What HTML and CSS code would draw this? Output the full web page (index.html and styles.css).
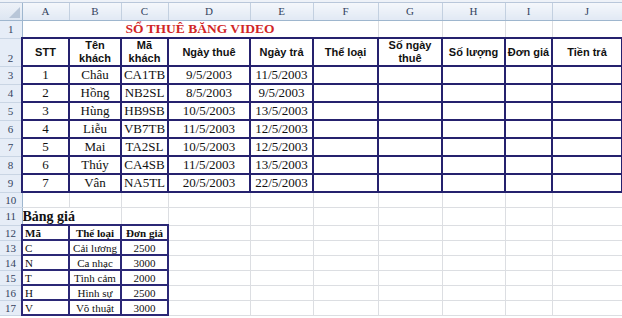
FILE: index.html
```html
<!DOCTYPE html>
<html lang="vi">
<head>
<meta charset="utf-8">
<title>Sổ thuê băng video</title>
<link rel="stylesheet" href="styles.css">
</head>
<body>
<div class="topstrip"></div>
<table class="sheet">
  <colgroup>
    <col class="w-hdr"><col class="w-a"><col class="w-b"><col class="w-c"><col class="w-d"><col class="w-e"><col class="w-f"><col class="w-g"><col class="w-h"><col class="w-i"><col class="w-j">
  </colgroup>
  <tr class="r-colhdr">
    <th class="corner"><span class="tri"></span></th>
    <th class="colhdr">A</th><th class="colhdr">B</th><th class="colhdr">C</th><th class="colhdr">D</th><th class="colhdr">E</th><th class="colhdr">F</th><th class="colhdr">G</th><th class="colhdr">H</th><th class="colhdr">I</th><th class="colhdr">J</th>
  </tr>
  <tr class="r-1">
    <th class="rowhdr">1</th>
    <td class="g title" colspan="6">SỔ THUÊ BĂNG VIDEO</td>
    <td class="g"></td><td class="g"></td><td class="g"></td><td class="g"></td>
  </tr>
  <tr class="r-2">
    <th class="rowhdr bottom">2</th>
    <td class="t hd">STT</td><td class="t hd">Tên<br>khách</td><td class="t hd">Mã<br>khách</td><td class="t hd">Ngày thuê</td><td class="t hd">Ngày trả</td><td class="t hd">Thể loại</td><td class="t hd">Số ngày<br>thuê</td><td class="t hd">Số lượng</td><td class="t hd">Đơn giá</td><td class="t hd">Tiền trả</td>
  </tr>
  <tr class="r-d">
    <th class="rowhdr">3</th>
    <td class="t d">1</td><td class="t d">Châu</td><td class="t d">CA1TB</td><td class="t d">9/5/2003</td><td class="t d">11/5/2003</td><td class="t"></td><td class="t"></td><td class="t"></td><td class="t"></td><td class="t"></td>
  </tr>
  <tr class="r-d">
    <th class="rowhdr">4</th>
    <td class="t d">2</td><td class="t d">Hồng</td><td class="t d">NB2SL</td><td class="t d">8/5/2003</td><td class="t d">9/5/2003</td><td class="t"></td><td class="t"></td><td class="t"></td><td class="t"></td><td class="t"></td>
  </tr>
  <tr class="r-d">
    <th class="rowhdr">5</th>
    <td class="t d">3</td><td class="t d">Hùng</td><td class="t d">HB9SB</td><td class="t d">10/5/2003</td><td class="t d">13/5/2003</td><td class="t"></td><td class="t"></td><td class="t"></td><td class="t"></td><td class="t"></td>
  </tr>
  <tr class="r-d">
    <th class="rowhdr">6</th>
    <td class="t d">4</td><td class="t d">Liễu</td><td class="t d">VB7TB</td><td class="t d">11/5/2003</td><td class="t d">12/5/2003</td><td class="t"></td><td class="t"></td><td class="t"></td><td class="t"></td><td class="t"></td>
  </tr>
  <tr class="r-d">
    <th class="rowhdr">7</th>
    <td class="t d">5</td><td class="t d">Mai</td><td class="t d">TA2SL</td><td class="t d">10/5/2003</td><td class="t d">12/5/2003</td><td class="t"></td><td class="t"></td><td class="t"></td><td class="t"></td><td class="t"></td>
  </tr>
  <tr class="r-d">
    <th class="rowhdr">8</th>
    <td class="t d">6</td><td class="t d">Thúy</td><td class="t d">CA4SB</td><td class="t d">11/5/2003</td><td class="t d">13/5/2003</td><td class="t"></td><td class="t"></td><td class="t"></td><td class="t"></td><td class="t"></td>
  </tr>
  <tr class="r-d">
    <th class="rowhdr">9</th>
    <td class="t d">7</td><td class="t d">Vân</td><td class="t d">NA5TL</td><td class="t d">20/5/2003</td><td class="t d">22/5/2003</td><td class="t"></td><td class="t"></td><td class="t"></td><td class="t"></td><td class="t"></td>
  </tr>
  <tr class="r-10">
    <th class="rowhdr">10</th>
    <td class="g"></td><td class="g"></td><td class="g"></td><td class="g"></td><td class="g"></td><td class="g"></td><td class="g"></td><td class="g"></td><td class="g"></td><td class="g"></td>
  </tr>
  <tr class="r-11">
    <th class="rowhdr">11</th>
    <td class="g section" colspan="2">Bảng giá</td><td class="g"></td><td class="g"></td><td class="g"></td><td class="g"></td><td class="g"></td><td class="g"></td><td class="g"></td><td class="g"></td>
  </tr>
  <tr class="r-p">
    <th class="rowhdr">12</th>
    <td class="p ph left">Mã</td><td class="p ph">Thể loại</td><td class="p ph">Đơn giá</td><td class="g"></td><td class="g"></td><td class="g"></td><td class="g"></td><td class="g"></td><td class="g"></td><td class="g"></td>
  </tr>
  <tr class="r-p">
    <th class="rowhdr">13</th>
    <td class="p left">C</td><td class="p">Cải lương</td><td class="p">2500</td><td class="g"></td><td class="g"></td><td class="g"></td><td class="g"></td><td class="g"></td><td class="g"></td><td class="g"></td>
  </tr>
  <tr class="r-p">
    <th class="rowhdr">14</th>
    <td class="p left">N</td><td class="p">Ca nhạc</td><td class="p">3000</td><td class="g"></td><td class="g"></td><td class="g"></td><td class="g"></td><td class="g"></td><td class="g"></td><td class="g"></td>
  </tr>
  <tr class="r-p">
    <th class="rowhdr">15</th>
    <td class="p left">T</td><td class="p">Tình cảm</td><td class="p">2000</td><td class="g"></td><td class="g"></td><td class="g"></td><td class="g"></td><td class="g"></td><td class="g"></td><td class="g"></td>
  </tr>
  <tr class="r-p">
    <th class="rowhdr">16</th>
    <td class="p left">H</td><td class="p">Hình sự</td><td class="p">2500</td><td class="g"></td><td class="g"></td><td class="g"></td><td class="g"></td><td class="g"></td><td class="g"></td><td class="g"></td>
  </tr>
  <tr class="r-p">
    <th class="rowhdr">17</th>
    <td class="p left">V</td><td class="p">Võ thuật</td><td class="p">3000</td><td class="g"></td><td class="g"></td><td class="g"></td><td class="g"></td><td class="g"></td><td class="g"></td><td class="g"></td>
  </tr>
</table>
</body>
</html>
```

FILE: styles.css
```css
html, body {
  margin: 0;
  padding: 0;
  background: #ffffff;
  overflow: hidden;
}

body {
  width: 622px;
  height: 318px;
  font-family: "Liberation Serif", "Times New Roman", serif;
}

.topstrip {
  height: 2px;
  background: #eef2f8;
  border-bottom: 1px solid #b9c7da;
}

.sheet {
  width: 622px;
  table-layout: fixed;
  border-collapse: collapse;
  border-spacing: 0;
}

.w-hdr { width: 22px; }
.w-a { width: 47px; }
.w-b { width: 52px; }
.w-c { width: 47px; }
.w-d { width: 82px; }
.w-e { width: 63px; }
.w-f { width: 65px; }
.w-g { width: 64px; }
.w-h { width: 63px; }
.w-i { width: 47px; }
.w-j { width: 70px; }

.sheet td, .sheet th {
  padding: 0;
  overflow: hidden;
  white-space: nowrap;
}

.r-colhdr { height: 17px; }
.r-1 { height: 18px; }
.r-2 { height: 27px; }
.r-d { height: 18px; }
.r-10 { height: 15px; }
.r-11 { height: 18px; }
.r-p { height: 15px; }

/* headers */
.corner {
  position: relative;
  background: linear-gradient(#eef2f8, #dde6f2);
  border-right: 1px solid #9eb6ce;
  border-bottom: 1px solid #9eb6ce;
}

.tri {
  position: absolute;
  right: 2px;
  bottom: 2px;
  width: 0;
  height: 0;
  border-left: 11px solid transparent;
  border-bottom: 11px solid #b8c6d8;
}

.colhdr {
  background: linear-gradient(#f4f7fb, #e1e9f4);
  border-right: 1px solid #c3d0e0;
  border-bottom: 1px solid #9eb6ce;
  font-family: "Liberation Serif", serif;
  font-weight: normal;
  font-size: 11px;
  color: #34435e;
  text-align: center;
  vertical-align: middle;
}

.rowhdr {
  background: #e6edf7;
  border-right: 1px solid #9eb6ce;
  border-bottom: 1px solid #c9d5e4;
  font-family: "Liberation Serif", serif;
  font-weight: normal;
  font-size: 11px;
  line-height: 12px;
  color: #34435e;
  text-align: center;
  vertical-align: middle;
}

.rowhdr.bottom {
  vertical-align: bottom;
  padding-bottom: 2px;
}

/* plain grid cells */
.g {
  border: 1px solid #dcdee2;
}

.title {
  text-align: center;
  vertical-align: middle;
  color: #d12626;
  font-family: "Liberation Serif", serif;
  font-weight: bold;
  font-size: 13.5px;
}

/* main table */
.t {
  border: 2px solid #25216e;
  text-align: center;
  vertical-align: middle;
}

.hd {
  font-family: "Liberation Sans", Arial, sans-serif;
  font-weight: bold;
  font-size: 11px;
  line-height: 13px;
  color: #111111;
}

.d {
  font-family: "Liberation Serif", serif;
  font-size: 13px;
  color: #111111;
}

.section {
  font-family: "Liberation Serif", serif;
  font-weight: bold;
  font-size: 14px;
  line-height: 15px;
  color: #111111;
  padding-left: 3px;
  vertical-align: bottom;
  padding-bottom: 1px;
}

/* price table */
.p {
  border: 2px solid #2b2876;
  text-align: center;
  vertical-align: middle;
  font-family: "Liberation Serif", serif;
  font-size: 11px;
  line-height: 12px;
  color: #111111;
}

.p.left {
  text-align: left;
  padding-left: 2px;
}

.ph {
  font-weight: bold;
}
```
